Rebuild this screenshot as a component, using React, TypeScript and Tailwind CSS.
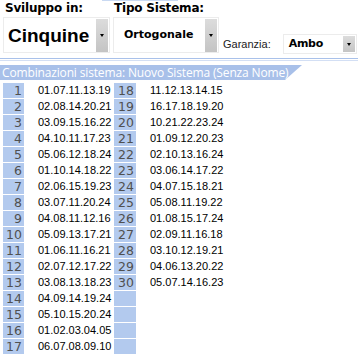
import React from 'react';

const left: [string, string][] = [
    ['1', '01.07.11.13.19'], ['2', '02.08.14.20.21'], ['3', '03.09.15.16.22'], ['4', '04.10.11.17.23'],
    ['5', '05.06.12.18.24'], ['6', '01.10.14.18.22'], ['7', '02.06.15.19.23'], ['8', '03.07.11.20.24'],
    ['9', '04.08.11.12.16'], ['10', '05.09.13.17.21'], ['11', '01.06.11.16.21'], ['12', '02.07.12.17.22'],
    ['13', '03.08.13.18.23'], ['14', '04.09.14.19.24'], ['15', '05.10.15.20.24'], ['16', '01.02.03.04.05'],
    ['17', '06.07.08.09.10'],
];

const right: [string, string][] = [
    ['18', '11.12.13.14.15'], ['19', '16.17.18.19.20'], ['20', '10.21.22.23.24'], ['21', '01.09.12.20.23'],
    ['22', '02.10.13.16.24'], ['23', '03.06.14.17.22'], ['24', '04.07.15.18.21'], ['25', '05.08.11.19.22'],
    ['26', '01.08.15.17.24'], ['27', '02.09.11.16.18'], ['28', '03.10.12.19.21'], ['29', '04.06.13.20.22'],
    ['30', '05.07.14.16.23'],
];

const Arrow = ({ h }: { h: string }) => (
    <div className={`w-[12px] ${h} bg-gradient-to-b from-[#dcdcdc] to-[#c4c4c4] flex items-center justify-center`}>
        <div className="w-0 h-0 border-l-[2.5px] border-r-[2.5px] border-t-[3px] border-l-transparent border-r-transparent border-t-black" />
    </div>
);

const NumCell = ({ n, w }: { n?: string; w: string }) => (
    <div className={`${w} h-[15px] bg-[#b3caee] text-right pr-[2px] text-[12.5px] leading-[15px] text-[#505050] font-['DejaVu_Sans',sans-serif]`}>
        {n}
    </div>
);

export default function App() {
    return (
        <div className="w-[358px] h-[362px] bg-white overflow-hidden font-['Liberation_Sans',Arial,sans-serif] text-black">
            <div className="h-px ml-[102px] w-[76px] bg-[#c9d9f2]" />
            <div className="flex h-[57px]">
                <div className="ml-[3px] w-[107px] flex flex-col">
                    <div className="h-[16px] pl-[2px] text-[12px] font-bold leading-[15px] font-['DejaVu_Sans',sans-serif] tracking-[-0.2px]">Sviluppo in:</div>
                    <div className="h-[36px] border border-[#ececec] flex items-center pr-[1px]">
                        <div className="flex-1 pl-[4px] text-[19px] font-bold leading-[20px] mt-[1px]">Cinquine</div>
                        <Arrow h="h-[33px]" />
                    </div>
                </div>
                <div className="ml-[3px] w-[106px] flex flex-col">
                    <div className="h-[16px] pl-[1px] text-[12px] font-bold leading-[15px] font-['DejaVu_Sans',sans-serif] tracking-[-0.2px] whitespace-nowrap">Tipo Sistema:</div>
                    <div className="h-[36px] border border-[#ececec] flex items-center pr-[1px]">
                        <div className="flex-1 pl-[10px] text-[11px] font-bold leading-[14px] font-['DejaVu_Sans',sans-serif]">Ortogonale</div>
                        <Arrow h="h-[33px]" />
                    </div>
                </div>
                <div className="ml-[4px] mt-[37px] text-[11px] leading-[12px] text-[#222]">Garanzia:</div>
                <div className="ml-[12px] mt-[33px] w-[74px] h-[20px] border border-[#ececec] flex items-center pr-[1px]">
                    <div className="flex-1 pl-[5px] text-[11px] font-bold leading-[14px] font-['DejaVu_Sans',sans-serif] tracking-[-0.3px]">Ambo</div>
                    <Arrow h="h-[16px]" />
                </div>
            </div>
            <div className="h-px bg-[#a9c1ea]" />
            <div className="h-px bg-white" />
            <div className="h-px bg-[#d3dff4]" />
            <div className="mt-[4px] h-[15px] w-[302px] bg-[#a8c0e9] [clip-path:polygon(0_0,302px_0,285px_100%,0_100%)] pl-[2px] text-white text-[12px] leading-[15px] font-['Open_Sans',sans-serif] tracking-[-0.15px] whitespace-nowrap">
                Combinazioni sistema: Nuovo Sistema (Senza Nome)
            </div>
            <div className="mt-[3px] flex flex-col gap-px pl-[3px]">
                {left.map(([n, c], i) => (
                    <div key={n} className="flex h-[15px]">
                        <NumCell n={n} w="w-[21px]" />
                        <div className="w-[90px] pl-[14px] text-[11px] leading-[15px]">{c}</div>
                        <NumCell n={right[i]?.[0]} w="w-[22px]" />
                        <div className="pl-[14px] text-[11px] leading-[15px]">{right[i]?.[1]}</div>
                    </div>
                ))}
            </div>
        </div>
    );
}
